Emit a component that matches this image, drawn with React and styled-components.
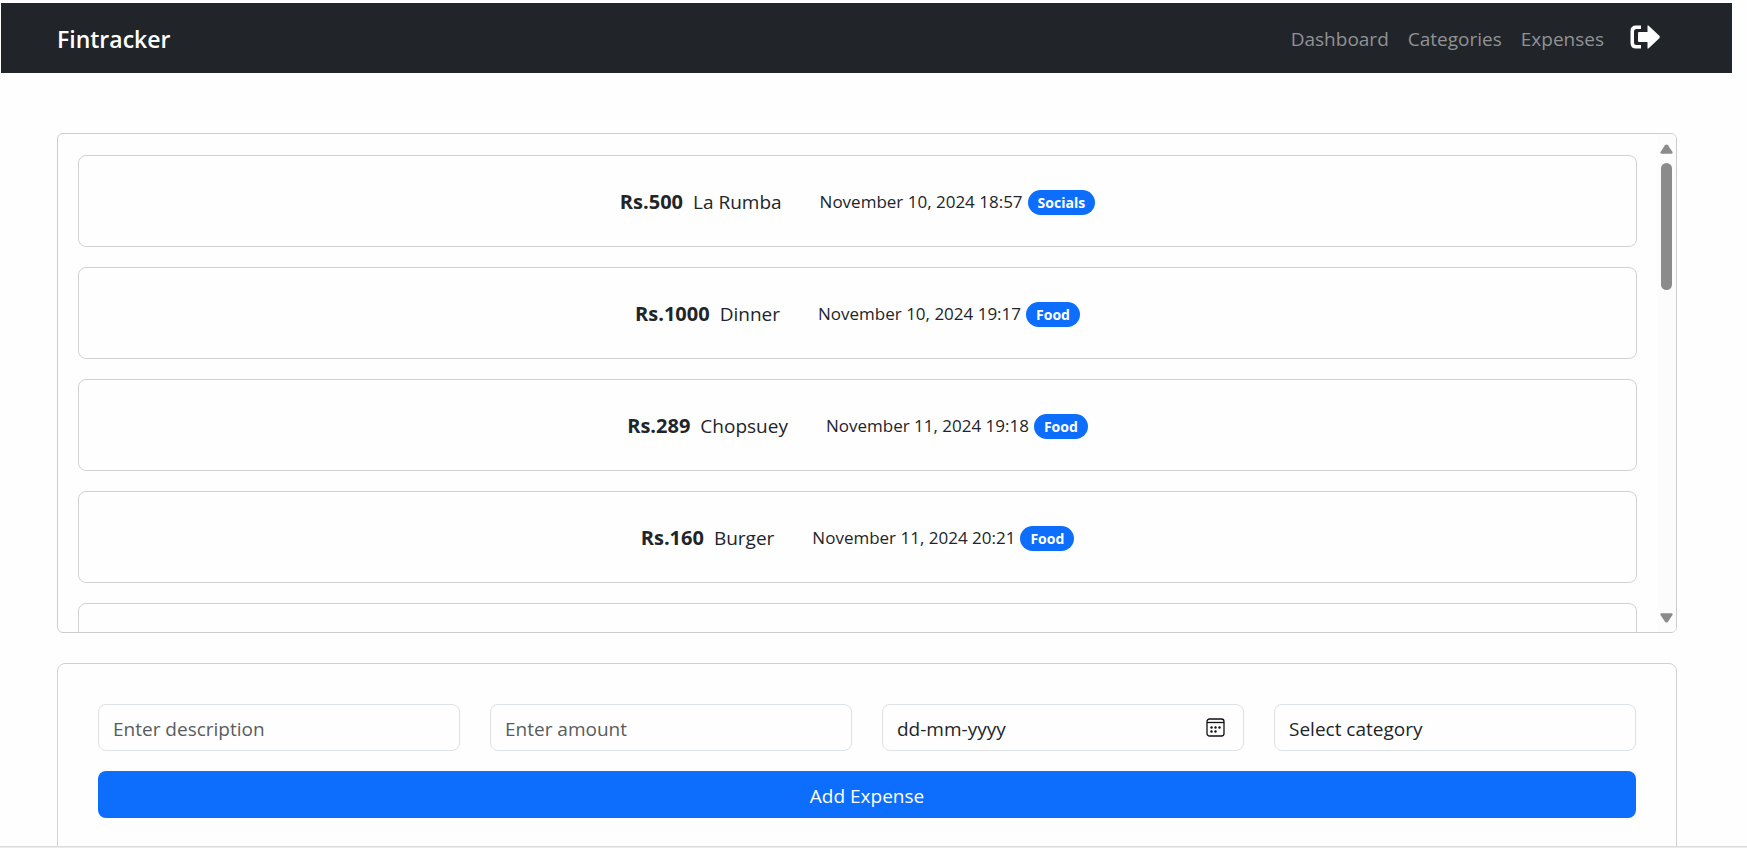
import React, { useState } from "react";
import styled, { createGlobalStyle } from "styled-components";

const GlobalStyle = createGlobalStyle`
  *, *::before, *::after { box-sizing: border-box; }
  body {
    margin: 0;
    background: #fefefe;
    color: #212529;
    font-family: "Segoe UI", "Open Sans", "Noto Sans", sans-serif;
    font-size: 19px;
    line-height: 30px;
  }
  button, input, select { font: inherit; color: inherit; }
`;

const Page = styled.div`
  height: 100vh;
  display: flex;
  flex-direction: column;
  overflow: hidden;
`;

const Viewport = styled.div`
  flex: 1;
  min-height: 0;
  overflow: hidden;
  padding: 3px 15px 0 1px;
`;

const BottomEdge = styled.footer`
  flex: none;
  height: 2px;
  border-top: 1px solid #dcdcdc;
  background: #ececec;
`;

const Navbar = styled.header`
  display: flex;
  align-items: center;
  justify-content: space-between;
  height: 70px;
  padding: 2px 56px 0;
  background: #212529;
`;

const Brand = styled.a`
  color: #fff;
  font-size: 23px;
  font-weight: 600;
  text-decoration: none;
`;

const NavLinks = styled.nav`
  display: flex;
  align-items: center;
  gap: 19px;
`;

const NavLink = styled.a`
  color: #909294;
  text-decoration: none;
`;

const LogoutButton = styled.button`
  display: flex;
  margin: 0 16px 4px 7px;
  padding: 0;
  border: 0;
  background: none;
  color: #fff;
  cursor: pointer;
`;

const Content = styled.main`
  display: flex;
  flex-direction: column;
  gap: 30px;
  padding: 60px 55px 0 56px;
`;

const ListPanel = styled.section`
  display: flex;
  height: 500px;
  border: 1px solid #cccccc;
  border-radius: 6px;
  overflow: hidden;
`;

const ExpenseList = styled.ul`
  flex: 1;
  display: flex;
  flex-direction: column;
  gap: 20px;
  margin: 0;
  padding: 21px 20px 20px;
  list-style: none;
  overflow-y: auto;
  scrollbar-width: none;
`;

const ExpenseCard = styled.li`
  flex: none;
  display: flex;
  align-items: center;
  justify-content: center;
  height: 92px;
  padding-top: 2px;
  border: 1px solid #d0d1d2;
  border-radius: 8px;
`;

const Amount = styled.strong`
  font-size: 20px;
  font-weight: 700;
`;

const Description = styled.span`
  margin-left: 10px;
`;

const Timestamp = styled.time`
  margin-left: 38px;
  font-size: 17px;
`;

const Badge = styled.span`
  height: 25px;
  margin-left: 5px;
  padding: 0 10px;
  border-radius: 13px;
  background: #0d6efd;
  color: #fff;
  font-size: 14px;
  font-weight: 700;
  line-height: 25px;
`;

const ScrollTrack = styled.div`
  flex: none;
  width: 19px;
  display: flex;
  flex-direction: column;
  align-items: center;
  padding: 10px 0 9px;
  background: #fcfcfc;
`;

const ScrollThumb = styled.div`
  width: 11px;
  height: 127px;
  margin: 9px 0 auto;
  border-radius: 6px;
  background: #8b8b8b;
`;

const FormCard = styled.form`
  display: flex;
  flex-direction: column;
  gap: 20px;
  padding: 40px;
  border: 1px solid #d0d1d2;
  border-radius: 8px;
`;

const Fields = styled.div`
  display: grid;
  grid-template-columns: repeat(4, 1fr);
  gap: 30px;
`;

const Field = styled.div`
  display: flex;
  align-items: center;
  height: 47px;
  border: 1px solid #dee2e6;
  border-radius: 8px;
`;

const TextInput = styled.input`
  flex: 1;
  min-width: 0;
  height: 100%;
  padding: 2px 14px 0;
  border: 0;
  outline: 0;
  background: none;
  &::placeholder {
    color: ${(p) => (p.$dark ? "#212529" : "#595c5f")};
    opacity: 1;
  }
`;

const Select = styled.select`
  flex: 1;
  height: 100%;
  padding: 2px 14px 0;
  border: 0;
  outline: 0;
  background: none;
  appearance: none;
`;

const CalendarButton = styled.button`
  display: flex;
  margin-right: 18px;
  padding: 0;
  border: 0;
  background: none;
`;

const SubmitButton = styled.button`
  height: 47px;
  padding: 2px 0 0;
  border: 0;
  border-radius: 8px;
  background: #0d6efd;
  color: #fff;
  cursor: pointer;
`;

const LogoutIcon = () => (
  <svg width="30" height="24" viewBox="0 0 30 24" fill="currentColor" aria-hidden="true">
    <path d="M11 0.5V4H6.5Q4 4 4 6.500V17.500Q4 20 6.500 20H11V23.500H6Q0.500 23.500 0.500 18V6Q0.500 0.500 6 0.500Z" />
    <path d="M17.500 1.200Q17.500 -0.300 18.700 0.800L29.300 10.800Q30.300 12 29.300 13.200L18.700 23.200Q17.500 24.300 17.500 22.800V17H9Q8 17 8 16V8Q8 7 9 7H17.500Z" />
  </svg>
);

const CalendarIcon = () => (
  <svg width="19" height="19" viewBox="0 0 19 19" aria-hidden="true">
    <rect x="1" y="1" width="17" height="17" rx="2.500" fill="none" stroke="#111" strokeWidth="1.300" />
    <path d="M1 4.500H18" stroke="#111" strokeWidth="1.300" />
    <g fill="#111">
      <circle cx="5.500" cy="9.500" r="1.200" />
      <circle cx="9.500" cy="9.500" r="1.200" />
      <circle cx="13.500" cy="9.500" r="1.200" />
      <circle cx="5.500" cy="13.500" r="1.200" />
      <circle cx="9.500" cy="13.500" r="1.200" />
    </g>
  </svg>
);

const ArrowIcon = ({ down }) => (
  <svg width="13" height="10" viewBox="0 0 13 10" fill="#8b8b8b" aria-hidden="true">
    <path
      d={
        down
          ? "M1.500 0.300H11.500Q13.300 0.600 12.300 2.200L8 8.700Q6.500 10.500 5 8.700L0.700 2.200Q-0.300 0.600 1.500 0.300Z"
          : "M1.500 9.700H11.500Q13.300 9.400 12.300 7.800L8 1.300Q6.500 -0.500 5 1.300L0.700 7.800Q-0.300 9.400 1.500 9.700Z"
      }
    />
  </svg>
);

const initialExpenses = [
  { id: 1, amount: 500, description: "La Rumba", date: "November 10, 2024 18:57", category: "Socials" },
  { id: 2, amount: 1000, description: "Dinner", date: "November 10, 2024 19:17", category: "Food" },
  { id: 3, amount: 289, description: "Chopsuey", date: "November 11, 2024 19:18", category: "Food" },
  { id: 4, amount: 160, description: "Burger", date: "November 11, 2024 20:21", category: "Food" },
];

export default function App() {
  const [category, setCategory] = useState("");

  return (
    <Page>
      <GlobalStyle />
      <Viewport>
        <Navbar>
          <Brand href="#home">Fintracker</Brand>
          <NavLinks>
            <NavLink href="#dashboard">Dashboard</NavLink>
            <NavLink href="#categories">Categories</NavLink>
            <NavLink href="#expenses">Expenses</NavLink>
            <LogoutButton type="button" aria-label="Log out">
              <LogoutIcon />
            </LogoutButton>
          </NavLinks>
        </Navbar>
        <Content>
          <ListPanel>
            <ExpenseList>
              {initialExpenses.map((e) => (
                <ExpenseCard key={e.id}>
                  <Amount>Rs.{e.amount}</Amount>
                  <Description>{e.description}</Description>
                  <Timestamp>{e.date}</Timestamp>
                  <Badge>{e.category}</Badge>
                </ExpenseCard>
              ))}
              <ExpenseCard />
            </ExpenseList>
            <ScrollTrack>
              <ArrowIcon />
              <ScrollThumb />
              <ArrowIcon down />
            </ScrollTrack>
          </ListPanel>
          <FormCard onSubmit={(e) => e.preventDefault()}>
            <Fields>
              <Field>
                <TextInput aria-label="Description" placeholder="Enter description" />
              </Field>
              <Field>
                <TextInput aria-label="Amount" inputMode="decimal" placeholder="Enter amount" />
              </Field>
              <Field>
                <TextInput $dark aria-label="Date" placeholder="dd-mm-yyyy" />
                <CalendarButton type="button" aria-label="Open calendar">
                  <CalendarIcon />
                </CalendarButton>
              </Field>
              <Field>
                <Select aria-label="Category" value={category} onChange={(e) => setCategory(e.target.value)}>
                  <option value="">Select category</option>
                  <option>Food</option>
                  <option>Socials</option>
                </Select>
              </Field>
            </Fields>
            <SubmitButton type="submit">Add Expense</SubmitButton>
          </FormCard>
        </Content>
      </Viewport>
      <BottomEdge />
    </Page>
  );
}
